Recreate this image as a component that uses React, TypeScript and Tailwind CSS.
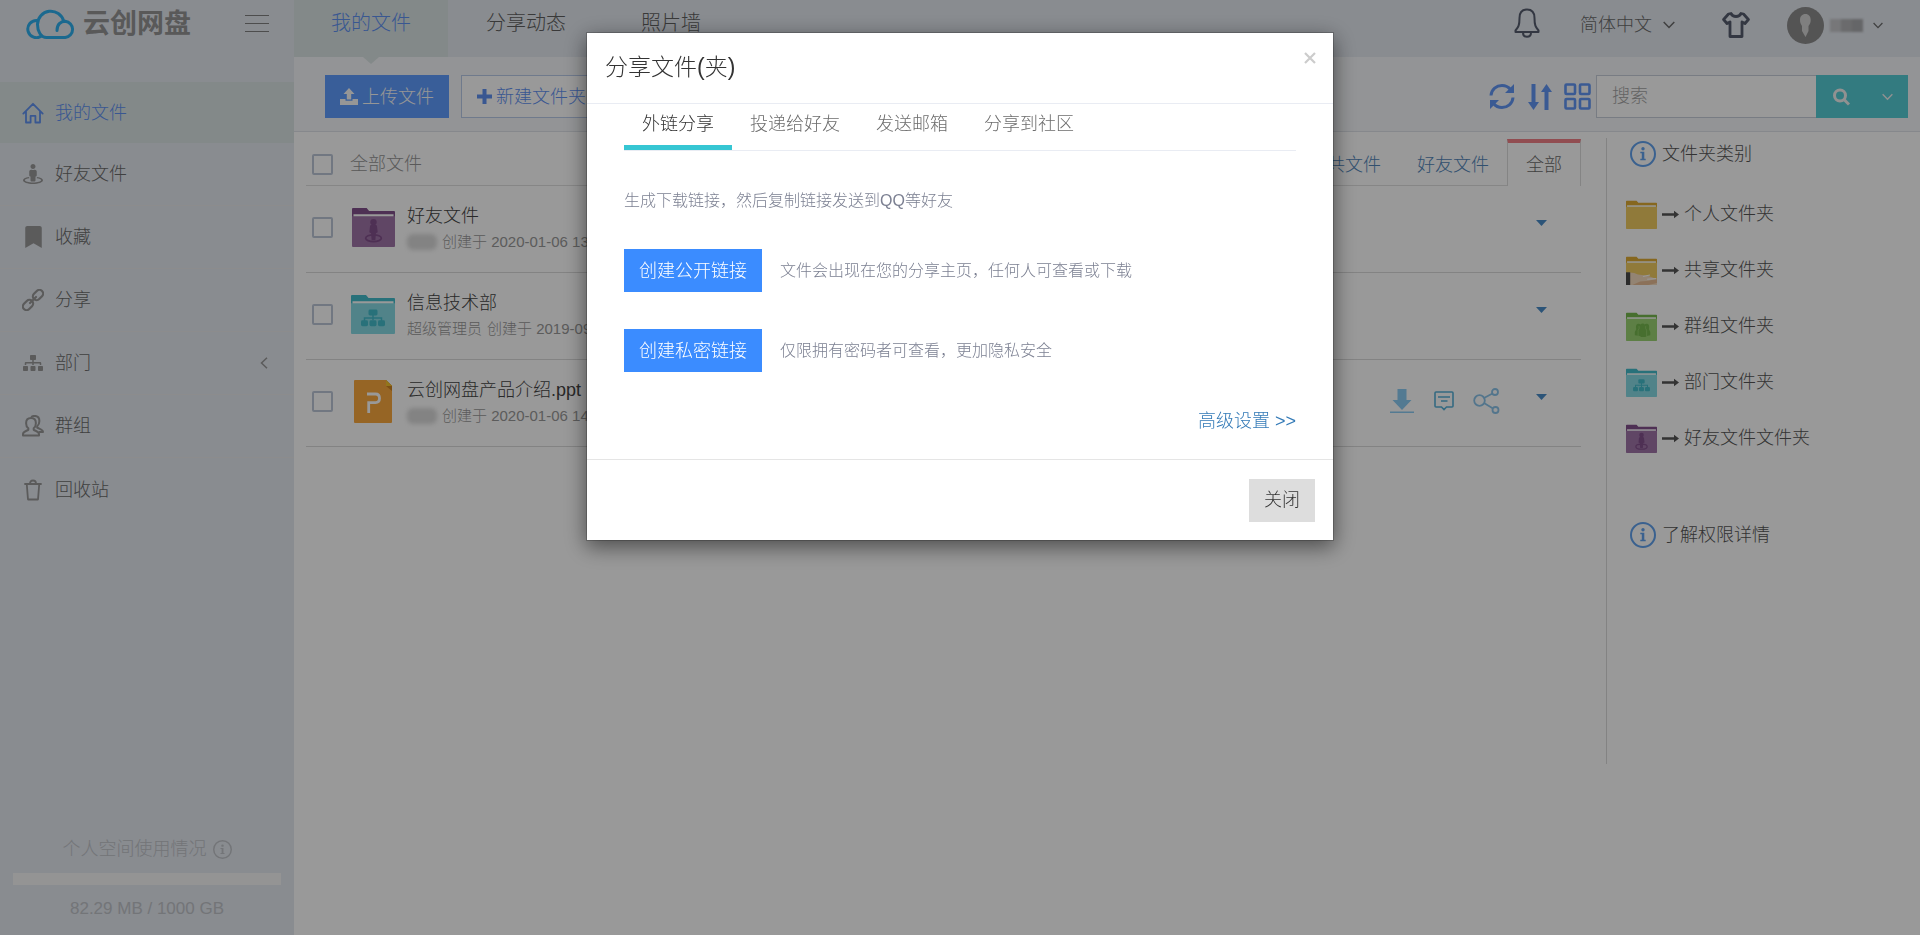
import { useState, type ReactNode } from "react";
import { FaSitemap, FaStreetView, FaBookmark } from "react-icons/fa";

type IconProps = { className?: string };

const HomeIcon = ({ className }: IconProps) => (
  <svg viewBox="0 0 22 22" className={className} fill="none" stroke="currentColor" strokeWidth="1.8" strokeLinejoin="round" strokeLinecap="round">
    <path d="M1.3 11.6 11 1.8l9.700 9.800M4 9.500v11h4.600v-6.600h4.800v6.600H18v-11" />
  </svg>
);

const LinkIcon = ({ className }: IconProps) => (
  <svg viewBox="0 0 22 22" className={className} fill="none" stroke="currentColor" strokeWidth="2.200">
    <rect x="-5.700" y="-3.700" width="11.400" height="7.400" rx="3.700" transform="translate(6 16) rotate(-45)" />
    <rect x="-5.700" y="-3.700" width="11.400" height="7.400" rx="3.700" transform="translate(16 6) rotate(-45)" />
    <path d="m8 14 6-6" strokeLinecap="round" />
  </svg>
);

const GroupIcon = ({ className }: IconProps) => (
  <svg viewBox="0 0 22 22" className={className} fill="none" stroke="currentColor" strokeWidth="2" strokeLinejoin="round" strokeLinecap="round">
    <path d="M9 3c-3.200 0-4.900 2.200-4.900 5.200 0 2.200.8 4 2.200 5.100v1.500C4.500 16 1 16.400 1 19v1.600h16V19c0-2.600-3.500-3-5.300-4.200v-1.500c1.400-1.100 2.200-2.900 2.200-5.100C13.900 5.200 12.200 3 9 3Z" />
    <path d="M9.800 1.600c1-.5 1.700-.7 2.700-.7 3.200 0 4.900 2.200 4.900 5.200 0 2.200-.8 4-2.200 5.100v1.500c1.800 1.200 5.800 1.600 5.800 4.200h-3.500" />
  </svg>
);

const TrashIcon = ({ className }: IconProps) => (
  <svg viewBox="0 0 22 22" className={className} fill="none" stroke="currentColor" strokeWidth="1.800" strokeLinejoin="round" strokeLinecap="round">
    <path d="M3 5h16M8 4.500c0-2 .8-3 3-3s3 1 3 3M4.800 5.500l1.200 15h10l1.200-15" />
  </svg>
);

const Chevron = ({ className }: IconProps) => (
  <svg viewBox="0 0 12 8" className={className} fill="none" stroke="currentColor" strokeWidth="1.500">
    <path d="m.7 1 5.300 5.500L11.300 1" />
  </svg>
);

const InfoIcon = ({ className }: IconProps) => (
  <svg viewBox="0 0 26 26" className={className}>
    <circle cx="13" cy="13" r="12" fill="none" stroke="currentColor" strokeWidth="2" />
    <circle cx="13" cy="7.700" r="1.700" fill="currentColor" />
    <path d="M10.300 10.800h4v7h1.400v1.500h-5.400v-1.500h1.500v-5.500h-1.500z" fill="currentColor" />
  </svg>
);

const CloudLogo = () => (
  <svg viewBox="0 0 49 30" className="w-[49px] h-[30px]" fill="none" stroke="#2eb0ee" strokeWidth="3" strokeLinecap="round">
    <path d="M31 21.500c0-6 3.500-9.300 8.300-9.300a8.200 8.200 0 0 1 0 16.300H20.500C14.500 28.500 11.500 21.500 11.500 15.500a13.300 13.300 0 0 1 26.200-3.300" />
    <path d="M11.200 11.500A8.600 8.600 0 1 0 15.500 27" />
  </svg>
);

const Folder = ({ kind, className }: { kind: string; className?: string }) => {
  const palette: Record<string, string[]> = {
    person: ["#e0ac34", "#f0cb61"],
    share: ["#e0ac34", "#f0cb61"],
    group: ["#77b94f", "#9bd474"],
    dept: ["#43bccb", "#88dbe5"],
    friend: ["#83508c", "#a075a9"],
  };
  const [dark, light] = palette[kind];
  return (
    <svg viewBox="0 0 44 41" className={className} preserveAspectRatio="none">
      <path d="M0 2q0-1 1-1h14l2.500 3H43q1 0 1 1v12H0z" fill={dark} />
      <path d="M1.500 7.500h41v6h-41z" fill="#fff" />
      <path d="M0 9.500h44V40q0 1-1 1H1q-1 0-1-1z" fill={light} />
      {kind === "friend" && (
        <g fill={dark}>
          <circle cx="22" cy="15.500" r="3.300" />
          <path d="M18.500 19q3.500-2 7 0l.8 7-1.800 1-.6 7h-3.800l-.6-7-1.800-1z" />
          <ellipse cx="22" cy="32" rx="8" ry="3.500" fill="none" stroke={dark} strokeWidth="1.800" />
        </g>
      )}
      {kind === "dept" && (
        <g fill={dark}>
          <rect x="17.500" y="16" width="9" height="6" rx="1.500" />
          <path d="M22 21v6M13.500 28v-3.500h17V28" fill="none" stroke={dark} strokeWidth="1.500" />
          <rect x="10" y="27" width="7" height="6" rx="1.500" />
          <rect x="18.500" y="27" width="7" height="6" rx="1.500" />
          <rect x="27" y="27" width="7" height="6" rx="1.500" />
        </g>
      )}
      {kind === "group" && (
        <g fill={dark}>
          <path d="M12.500 33q-.5-6 2-8.500-1.500-7 2.500-8 2.500-.3 3.500 1 1.500-1.500 3.500-1.300 1.500.2 2.500 1.300 1-1.300 3.500-1 4 1 2.500 8 2.500 2.500 2 8.500l-5 1-2 1.500h-6l-2-1.500z" />
          <path d="M18.500 20q1 3-1.300 6v8M28 20q-1 3 1.300 6v8" fill="none" stroke={light} strokeWidth="1" />
        </g>
      )}
      {kind === "share" && (
        <g>
          <path d="M0 24q9-2 17 2l14 2 13 5v8H0z" fill="#f6dcc0" />
          <path d="M22 32h10M20 36l12-1 12-3v6l-12 3H9z" fill="#e8bd95" />
          <path d="M24 29l10-2M30 33l13-1" stroke="#fff" strokeWidth="1.500" />
          <path d="M0 23h6v18H0z" fill="#4a4a4a" />
        </g>
      )}
    </svg>
  );
};

const PptFile = () => (
  <svg viewBox="0 0 38 43" className="w-[38px] h-[43px]">
    <path d="M1 0h31l6 6v36q0 1-1 1H1q-1 0-1-1V1q0-1 1-1z" fill="#fba83e" />
    <path d="M32 0l6 6v5l-6-5z" fill="#cf8420" />
    <path d="M32 0l6 6h-6z" fill="#f6c32e" />
    <path d="M13 14h8.500q4 0 4 4.300t-4 4.300H14.700V33" fill="none" stroke="#fff" strokeWidth="2.800" />
  </svg>
);

const LongArrow = () => (
  <svg viewBox="0 0 17 9" className="w-[17px] h-[9px]" fill="#555">
    <path d="M0 3.300h12V.8l5 3.700-5 3.700V5.700H0z" />
  </svg>
);

const Caret = () => (
  <svg viewBox="0 0 11 6" className="w-[11px] h-[6px]" fill="#4a8cc8">
    <path d="M0 0h11L5.500 6z" />
  </svg>
);

const menu: { label: string; icon: ReactNode; sub?: boolean }[] = [
  { label: "我的文件", icon: <HomeIcon className="w-[22px] h-[22px]" /> },
  { label: "好友文件", icon: <FaStreetView className="w-5 h-5" /> },
  { label: "收藏", icon: <FaBookmark className="w-[17px] h-[22px]" /> },
  { label: "分享", icon: <LinkIcon className="w-[22px] h-[22px]" /> },
  { label: "部门", icon: <FaSitemap className="w-5 h-5" />, sub: true },
  { label: "群组", icon: <GroupIcon className="w-[22px] h-[22px]" /> },
  { label: "回收站", icon: <TrashIcon className="w-[22px] h-[22px]" /> },
];

const files = [
  { name: "好友文件", owner: "", meta: "创建于 2020-01-06 13:20", icon: <Folder kind="friend" className="w-[43px] h-10" />, actions: false },
  { name: "信息技术部", owner: "超级管理员", meta: "创建于 2019-09-20 10:12", icon: <Folder kind="dept" className="w-11 h-10" />, actions: false },
  { name: "云创网盘产品介绍.ppt", owner: "", meta: "创建于 2020-01-06 14:05", icon: <PptFile />, actions: true },
];

const folderKinds = [
  { kind: "person", label: "个人文件夹" },
  { kind: "share", label: "共享文件夹" },
  { kind: "group", label: "群组文件夹" },
  { kind: "dept", label: "部门文件夹" },
  { kind: "friend", label: "好友文件文件夹" },
];

const shareTabs = ["外链分享", "投递给好友", "发送邮箱", "分享到社区"];

const checkbox = "appearance-none w-[21px] h-[21px] shrink-0 border-2 border-[#bcc7d8] rounded-xs bg-white checked:bg-[#3b8cff]";

function Sidebar() {
  return (
    <aside className="w-[294px] shrink-0 bg-[#e4e9f0] flex flex-col">
      <div className="h-[82px] flex items-start justify-between pl-[26px] pr-[25px]">
        <div className="flex items-center gap-2 pt-[2px]">
          <CloudLogo />
          <span className="text-[27px] leading-[44px] font-bold text-[#949494]">云创网盘</span>
        </div>
        <button aria-label="折叠菜单" className="mt-[15px] flex flex-col gap-[7px] w-6">
          <span className="h-px w-full bg-[#808080]" />
          <span className="h-px w-full bg-[#808080]" />
          <span className="h-px w-full bg-[#808080]" />
        </button>
      </div>

      <nav>
        {menu.map((item, i) => (
          <a
            key={item.label}
            href="#"
            className={`flex items-center gap-[11px] pl-[22px] pr-6 ${
              i === 0 ? "h-[61px] bg-[#dbe4e4] text-[#5f92f2]" : "h-[63px] text-[#6b6b6b] border-b border-[#eaeaec] last:border-b-0"
            }`}
          >
            <span className={`w-[22px] flex justify-center ${i === 0 ? "" : "text-[#989898]"}`}>{item.icon}</span>
            <span>{item.label}</span>
            {item.sub && <Chevron className="w-3 h-2 ml-auto rotate-90 text-[#989898]" />}
          </a>
        ))}
      </nav>

      <div className="mt-auto px-[13px] pb-3 text-center text-[#c0c3c8]">
        <div className="flex items-center justify-center gap-[6px] leading-7">
          个人空间使用情况
          <InfoIcon className="w-[19px] h-[19px]" />
        </div>
        <div className="h-3 my-[10px] bg-[#f7f7f7]" />
        <div className="text-[17px] leading-7">82.29 MB / 1000 GB</div>
      </div>
    </aside>
  );
}

function TopBar() {
  return (
    <header className="h-[57px] bg-[#e4e9f0] flex justify-between">
      <nav className="flex gap-px text-xl leading-[46px] text-[#606060]">
        <a href="#" className="relative px-[37px] bg-[#dbe4e4] text-[#5f92f2]">
          我的文件
          <svg viewBox="0 0 16 7" className="absolute top-full left-1/2 -translate-x-1/2 w-4 h-[7px]" fill="#dbe4e4">
            <path d="M0 0h16L8 7z" />
          </svg>
        </a>
        <a href="#" className="px-[37px]">分享动态</a>
        <a href="#" className="px-[37px]">照片墙</a>
      </nav>
      <div className="flex items-center h-[50px] pr-[37px] text-[#6b6b6b]">
        <button aria-label="通知" className="text-[#565d6e] pb-1">
          <svg viewBox="0 0 26 30" className="w-[26px] h-[30px]" fill="none" stroke="currentColor" strokeWidth="2" strokeLinejoin="round">
            <path d="M13 1.500C8 1.500 5.500 5 5.500 10c0 7-1 9-4 12.500V24h23v-1.500c-3-3.500-4-5.500-4-12.500C20.500 5 18 1.500 13 1.500Z" />
            <path d="M9 24.500c0 3 1.500 4.300 4 4.300s4-1.300 4-4.300" />
          </svg>
        </button>
        <label className="ml-10 flex items-center gap-[11px]">
          <select aria-label="语言" className="appearance-none">
            <option>简体中文</option>
          </select>
          <Chevron className="w-3 h-2" />
        </label>
        <button aria-label="换肤" className="ml-[47px] text-[#565d6e]">
          <svg viewBox="0 0 28 26" className="w-7 h-[26px]" fill="none" stroke="currentColor" strokeWidth="2.800" strokeLinejoin="round">
            <path d="M9 1.500 6.500 2 1.600 7.500 5 11.500l3-1.500V24.500h12V10l3 1.500 3.400-4L21.500 2 19 1.500c-1 2-2.500 3-5 3S10 3.500 9 1.500Z" />
          </svg>
        </button>
        <button aria-label="用户菜单" className="ml-[37px] flex items-center">
          <svg viewBox="0 0 37 37" className="w-[37px] h-[37px]">
            <circle cx="18.500" cy="18.500" r="18.500" fill="#8c8c8c" />
            <path d="M18.500 7c-3.500 0-5.500 2.500-5.500 6 0 3 1 4.500 2 6v5l3.500 6 3-6v-5c1.200-1.500 2.200-3 2.200-6 0-3.500-2-6-5.200-6Z" fill="#d4d4d4" />
          </svg>
          <span className="ml-[6px] flex h-[13px] w-[33px] blur-[1px]">
            <span className="flex-1 bg-[#c6c7ca]" />
            <span className="flex-1 bg-[#b2b3b6]" />
            <span className="flex-1 bg-[#a9aaad]" />
          </span>
          <Chevron className="ml-[10px] w-[10px] h-[7px]" />
        </button>
      </div>
    </header>
  );
}

function Toolbar() {
  return (
    <div className="h-[75px] bg-[#f5f7fa] border-b border-[#dfe3e9] flex items-end justify-between pl-[31px] pr-3 pb-[13px]">
      <div className="flex gap-3">
        <button className="h-[43px] px-[15px] bg-[#5f9dff] text-[#fafafa] flex items-center gap-1">
          <svg viewBox="0 0 18 17" className="w-[18px] h-[17px]" fill="currentColor">
            <path d="M9 0l5.500 6h-3.300v5.500H6.800V6H3.500z" />
            <path d="M0 11h5.500v1.700h7V11H18v6H0z" />
          </svg>
          上传文件
        </button>
        <button className="h-[43px] px-[15px] border border-[#b9cbea] bg-white text-[#5f92f2] flex items-center gap-1">
          <svg viewBox="0 0 15 15" className="w-[15px] h-[15px]" fill="currentColor">
            <path d="M5.500 0h4v5.500H15v4H9.500V15h-4V9.500H0v-4h5.500z" />
          </svg>
          新建文件夹
        </button>
      </div>

      <div className="flex items-center text-[#6296f6]">
        <button aria-label="刷新">
          <svg viewBox="0 0 26 27" className="w-[26px] h-[27px]" fill="none" stroke="currentColor" strokeWidth="3">
            <path d="M2 12.500C2.500 6 7.500 2.500 13 2.500c3.500 0 6.500 1.500 8.500 4M24 14.500c-.5 6.500-5.500 10-11 10-3.500 0-6.500-1.500-8.500-4" />
            <path d="M25 1v9h-9zM1 26v-9h9z" fill="currentColor" stroke="none" />
          </svg>
        </button>
        <button aria-label="排序" className="ml-[13px]">
          <svg viewBox="0 0 24 26" className="w-6 h-[26px]" fill="currentColor">
            <path d="M3.500 0h4v18H11L5.500 26 0 18h3.500zM16.500 26h4V8H24l-5.500-8L13 8h3.500z" />
          </svg>
        </button>
        <button aria-label="网格视图" className="ml-3">
          <svg viewBox="0 0 27 27" className="w-[27px] h-[27px]" fill="none" stroke="currentColor" strokeWidth="2.600">
            <rect x="1.500" y="1.500" width="9.500" height="9.500" rx="1" />
            <rect x="16" y="1.500" width="9.500" height="9.500" rx="1" />
            <rect x="1.500" y="16" width="9.500" height="9.500" rx="1" />
            <rect x="16" y="16" width="9.500" height="9.500" rx="1" />
          </svg>
        </button>
        <input
          aria-label="搜索"
          placeholder="搜索"
          className="ml-[5px] w-[220px] h-[43px] px-[15px] border border-r-0 border-[#c8cfda] bg-white placeholder:text-[#a5a5a5] outline-none"
        />
        <button aria-label="开始搜索" className="h-[43px] w-[50px] flex items-center justify-center bg-[#56cdd5] text-[#f2f2f2]">
          <svg viewBox="0 0 17 18" className="w-[17px] h-[18px]" fill="none" stroke="currentColor" strokeWidth="3">
            <circle cx="7" cy="7.500" r="5.500" />
            <path d="m11 11.500 5 5" />
          </svg>
        </button>
        <button aria-label="搜索选项" className="h-[43px] w-[42px] flex items-center justify-center bg-[#56cdd5] text-[#f2f2f2]">
          <Chevron className="w-[11px] h-2" />
        </button>
      </div>
    </div>
  );
}

function FileList() {
  return (
    <section className="flex-1 ml-3 mr-[25px]">
      <div className="h-[54px] flex justify-between border-b border-[#e0e0e0]">
        <label className="flex items-center gap-[17px] pl-[6px] pt-[11px] text-[#959595]">
          <input type="checkbox" className={checkbox} />
          全部文件
        </label>
        <div className="flex mt-[7px] -mb-px text-[#5286ba]">
          <button className="px-[18px] border-t-4 border-transparent">公共文件</button>
          <button className="px-[18px] border-t-4 border-transparent">好友文件</button>
          <button className="px-[18px] border-x border-[#dcdcdc] border-t-4 border-t-[#f28088] bg-white text-[#6b6b6b]">全部</button>
        </div>
      </div>

      <ul>
        {files.map((f) => (
          <li key={f.name} className="h-[87px] flex items-center border-b border-[#dadada] pl-[6px] pr-[34px] pb-1">
            <input type="checkbox" aria-label={f.name} className={checkbox} />
            <span className="w-11 ml-[18px] flex justify-center">{f.icon}</span>
            <div className="ml-3 pt-1 leading-[26px]">
              <a href="#" className="block text-[#444]">{f.name}</a>
              <div className="flex items-center text-[15px] text-[#999]">
                {f.owner ? <span>{f.owner}</span> : <span className="w-[30px] h-4 rounded-md bg-[#dadada] blur-[2px]" />}
                <span className="ml-[5px]">{f.meta}</span>
              </div>
            </div>
            <div className="ml-auto flex items-center">
              {f.actions && (
                <>
                  <button aria-label="下载" className="text-[#8bcbf4]">
                    <svg viewBox="0 0 24 25" className="w-6 h-[25px]" fill="currentColor">
                      <path d="M7.500 0h9v11h5L12 21 2.500 11h5zM0 22.500h24V24H0z" />
                    </svg>
                  </button>
                  <button aria-label="评论" className="ml-5 text-[#58b1d8]">
                    <svg viewBox="0 0 20 20" className="w-5 h-5" fill="none" stroke="currentColor" strokeWidth="1.600">
                      <path d="M2 1h16q1 0 1 1v13q0 1-1 1h-5.500L10 18.500 7.500 16H2q-1 0-1-1V2q0-1 1-1ZM4 6h12M7 10h6.500" />
                    </svg>
                  </button>
                  <button aria-label="分享" className="ml-[19px] mr-9 text-[#8bc4ea]">
                    <svg viewBox="0 0 27 26" className="w-[27px] h-[26px]" fill="none" stroke="currentColor" strokeWidth="1.800">
                      <circle cx="6.500" cy="12.500" r="5.300" />
                      <circle cx="22" cy="4" r="3" />
                      <circle cx="22.500" cy="22" r="3" />
                      <path d="m11 10 8.500-4.500M11 15l9 5.500" />
                    </svg>
                  </button>
                </>
              )}
              <button aria-label="更多操作" className="pb-2">
                <Caret />
              </button>
            </div>
          </li>
        ))}
      </ul>
    </section>
  );
}

function FolderGuide() {
  return (
    <aside className="w-[314px] h-[626px] mt-[6px] border-l border-[#dadada] pl-[19px] text-[#555]">
      <div className="flex items-center gap-[6px] h-8 pl-1">
        <InfoIcon className="w-[26px] h-[26px] text-[#62a2ee]" />
        文件夹类别
      </div>
      <ul className="mt-4">
        {folderKinds.map((f) => (
          <li key={f.kind} className="h-14 flex items-center gap-[5px]">
            <Folder kind={f.kind} className="w-[31px] h-[29px]" />
            <LongArrow />
            <span>{f.label}</span>
          </li>
        ))}
      </ul>
      <a href="#" className="mt-[53px] flex items-center gap-[6px] h-8 pl-1">
        <InfoIcon className="w-[26px] h-[26px] text-[#62a2ee]" />
        了解权限详情
      </a>
    </aside>
  );
}

function ShareDialog() {
  const [active, setActive] = useState(0);
  return (
    <div className="fixed inset-0 bg-black/40 flex items-start justify-center pt-8">
      <div
        role="dialog"
        aria-label="分享文件(夹)"
        className="w-[748px] bg-white bg-clip-padding border border-black/20 shadow-[0_6px_20px_rgba(0,0,0,0.5)] text-[#333]"
      >
        <div className="h-[71px] flex items-start justify-between border-b border-[#e9ecf3] pl-[18px] pr-[17px]">
          <h4 className="text-[23px] leading-[68px]">分享文件(夹)</h4>
          <button aria-label="关闭窗口" className="mt-[19px] text-[#ccc]">
            <svg viewBox="0 0 12 12" className="w-3 h-3" fill="none" stroke="currentColor" strokeWidth="2.200">
              <path d="m1 1 10 10M11 1 1 11" />
            </svg>
          </button>
        </div>

        <div className="px-[37px]">
          <div className="h-[47px] flex border-b border-[#e9ecf3]">
            {shareTabs.map((tab, i) => (
              <button
                key={tab}
                onClick={() => setActive(i)}
                className={`px-[18px] pb-[2px] border-b-[5px] ${i === active ? "border-[#36c6d3] text-[#333]" : "border-transparent text-[#6c6c6c]"}`}
              >
                {tab}
              </button>
            ))}
          </div>
          <p className="mt-[37px] text-base leading-[26px] text-[#7c8092]">生成下载链接，然后复制链接发送到QQ等好友</p>
          <div className="mt-[35px] flex items-center gap-[18px]">
            <button className="h-[43px] px-[15px] bg-[#3b8cff] text-white">创建公开链接</button>
            <span className="text-base text-[#7c8092]">文件会出现在您的分享主页，任何人可查看或下载</span>
          </div>
          <div className="mt-[37px] flex items-center gap-[18px]">
            <button className="h-[43px] px-[15px] bg-[#3b8cff] text-white">创建私密链接</button>
            <span className="text-base text-[#7c8092]">仅限拥有密码者可查看，更加隐私安全</span>
          </div>
          <div className="mt-9 mb-[25px] text-right leading-[26px]">
            <a href="#" className="text-[#337ab7]">高级设置 &gt;&gt;</a>
          </div>
        </div>

        <div className="h-[81px] border-t border-[#e5e5e5] flex items-center justify-end pr-[18px]">
          <button className="h-[43px] px-[15px] bg-[#ddd] text-[#333]">关闭</button>
        </div>
      </div>
    </div>
  );
}

export default function App() {
  return (
    <div className="min-h-screen flex bg-white text-lg font-light font-['Liberation_Sans','Noto_Sans_CJK_SC',sans-serif]">
      <Sidebar />
      <div className="flex-1">
        <TopBar />
        <Toolbar />
        <div className="flex">
          <FileList />
          <FolderGuide />
        </div>
      </div>
      <ShareDialog />
    </div>
  );
}
